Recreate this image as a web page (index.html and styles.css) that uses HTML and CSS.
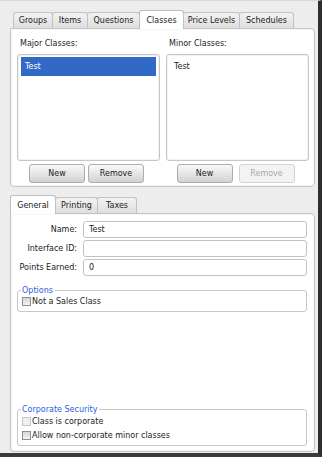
FILE: index.html
```html
<!DOCTYPE html>
<html lang="en">
<head>
  <meta charset="UTF-8" />
  <title>Classes</title>
  <link rel="stylesheet" href="styles.css">
</head>
<body>
  <div class="window">
    <div class="tabs top-tabs">
      <span class="tab t-groups">Groups</span>
      <span class="tab t-items">Items</span>
      <span class="tab t-questions">Questions</span>
      <span class="tab t-classes active">Classes</span>
      <span class="tab t-prices">Price Levels</span>
      <span class="tab t-schedules">Schedules</span>
    </div>
    <div class="panel classes-panel">
      <div class="col">
        <div class="caption">Major Classes:</div>
        <div class="list">
          <div class="list-item selected">Test</div>
        </div>
        <div class="buttons">
          <button class="btn">New</button>
          <button class="btn">Remove</button>
        </div>
      </div>
      <div class="col">
        <div class="caption">Minor Classes:</div>
        <div class="list">
          <div class="list-item">Test</div>
        </div>
        <div class="buttons wide-gap">
          <button class="btn">New</button>
          <button class="btn" disabled>Remove</button>
        </div>
      </div>
    </div>

    <div class="tabs sub-tabs">
      <span class="tab t-general active">General</span>
      <span class="tab t-printing">Printing</span>
      <span class="tab t-taxes">Taxes</span>
    </div>
    <div class="panel detail-panel">
      <div class="form-row">
        <label for="name">Name:</label>
        <input id="name" type="text" value="Test">
      </div>
      <div class="form-row">
        <label for="iface">Interface ID:</label>
        <input id="iface" type="text" value="">
      </div>
      <div class="form-row">
        <label for="points">Points Earned:</label>
        <input id="points" type="text" value="0">
      </div>

      <fieldset class="group options-group">
        <legend>Options</legend>
        <div class="check"><span class="box"></span>Not a Sales Class</div>
      </fieldset>

      <div class="spacer"></div>

      <fieldset class="group security-group">
        <legend>Corporate Security</legend>
        <div class="check"><span class="box disabled"></span>Class is corporate</div>
        <div class="check"><span class="box"></span>Allow non-corporate minor classes</div>
      </fieldset>
    </div>
  </div>
</body>
</html>
```

FILE: styles.css
```css
body {
  margin: 0;
  background: #fff;
  font-family: "DejaVu Sans", sans-serif;
  font-size: 8px;
  color: #222;
}
.window {
  background: #ededed;
  border-right: 4px solid #2e2e2e;
  border-bottom: 4px solid #3a3a3a;
  border-top: 1px solid #d8d8d8;
  padding: 9px 3px 0 10px;
  box-sizing: border-box;
  width: 322px;
  height: 457px;
  display: flex;
  flex-direction: column;
}

/* tabs */
.tabs {
  display: flex;
  align-items: flex-end;
  height: 18px;
  position: relative;
  z-index: 1;
}
.tab {
  height: 16px;
  box-sizing: border-box;
  border: 1px solid #c2c2c2;
  border-bottom: none;
  border-radius: 3px 3px 0 0;
  background: linear-gradient(#f2f2f2, #dedede);
  display: flex;
  align-items: center;
  justify-content: center;
  margin-right: -1px;
  color: #222;
}
.tab.active {
  height: 19px;
  margin-bottom: -1px;
  background: #fff;
  border-color: #bdbdbd;
}
.top-tabs { padding-left: 3px; }
.t-groups { width: 40px; }
.t-items { width: 36px; }
.t-questions { width: 53px; }
.t-classes { width: 45px; }
.t-prices { width: 57px; }
.t-schedules { width: 55px; }

.sub-tabs { margin-top: 9px; height: 17px; }
.t-general { width: 46px; }
.t-printing { width: 43px; }
.t-taxes { width: 40px; }

/* panels */
.panel {
  width: 305px;
  box-sizing: border-box;
  background: #fff;
  border: 1px solid #c4c4c4;
  border-radius: 0 4px 4px 4px;
  box-shadow: inset 0 0 0 1px #f6f6f6;
}
.classes-panel {
  height: 159px;
  display: flex;
  gap: 6px;
  padding: 9px 5px 0 6px;
}
.col {
  width: 143px;
  display: flex;
  flex-direction: column;
}
.caption {
  height: 12px;
  line-height: 12px;
  padding-left: 3px;
}
.list {
  margin-top: 4px;
  height: 107px;
  box-sizing: border-box;
  border: 1px solid #c6c6c6;
  border-radius: 3px;
  padding: 2px 3px;
  box-shadow: inset 0 0 0 1px #f2f2f2;
}
.list-item {
  height: 19px;
  line-height: 19px;
  padding-left: 4px;
}
.list-item.selected {
  background: #316ac5;
  color: #fff;
}
.buttons {
  display: flex;
  justify-content: center;
  gap: 3px;
  margin-top: 3px;
  padding-right: 4px;
}
.buttons.wide-gap { gap: 6px; }
.btn {
  width: 56px;
  height: 19px;
  padding: 0;
  font: inherit;
  color: #222;
  border: 1px solid #acacac;
  border-radius: 3px;
  background: linear-gradient(#f9f9f9, #e6e6e6 50%, #d2d2d2);
}
.btn:disabled {
  color: #a8a8a8;
  border-color: #d2d2d2;
  background: #f3f3f3;
}

/* detail form */
.detail-panel {
  flex: 1;
  margin-bottom: 1px;
  display: flex;
  flex-direction: column;
  padding: 7px 7px 5px 0;
}
.form-row {
  display: flex;
  align-items: center;
  gap: 6px;
  margin-bottom: 2px;
}
.form-row label {
  width: 66px;
  text-align: right;
  white-space: nowrap;
}
.form-row input {
  flex: 1;
  height: 17px;
  box-sizing: border-box;
  border: 1px solid #c3c3c3;
  border-radius: 3px;
  padding: 0 5px;
  font: inherit;
  color: #222;
}

.group {
  margin: 0 0 0 6px;
  border: 1px solid #c8c8c8;
  border-radius: 3px;
  padding: 0 4px 3px 4px;
}
.group legend {
  color: #2a5fe0;
  padding: 0 2px 0 1px;
  line-height: 9px;
  margin-left: -1px;
}
.options-group { margin-top: 8px; }
.check {
  display: flex;
  align-items: center;
  height: 13px;
}
.security-group .check { height: 14px; }
.box {
  width: 7px;
  height: 7px;
  border: 1px solid #8e8e8e;
  background: linear-gradient(#d6d6d6, #f4f4f4);
  margin-right: 1px;
}
.box.disabled {
  border-color: #c4c4c4;
  background: #f0f0f0;
}
.spacer { flex: 1; }
```
